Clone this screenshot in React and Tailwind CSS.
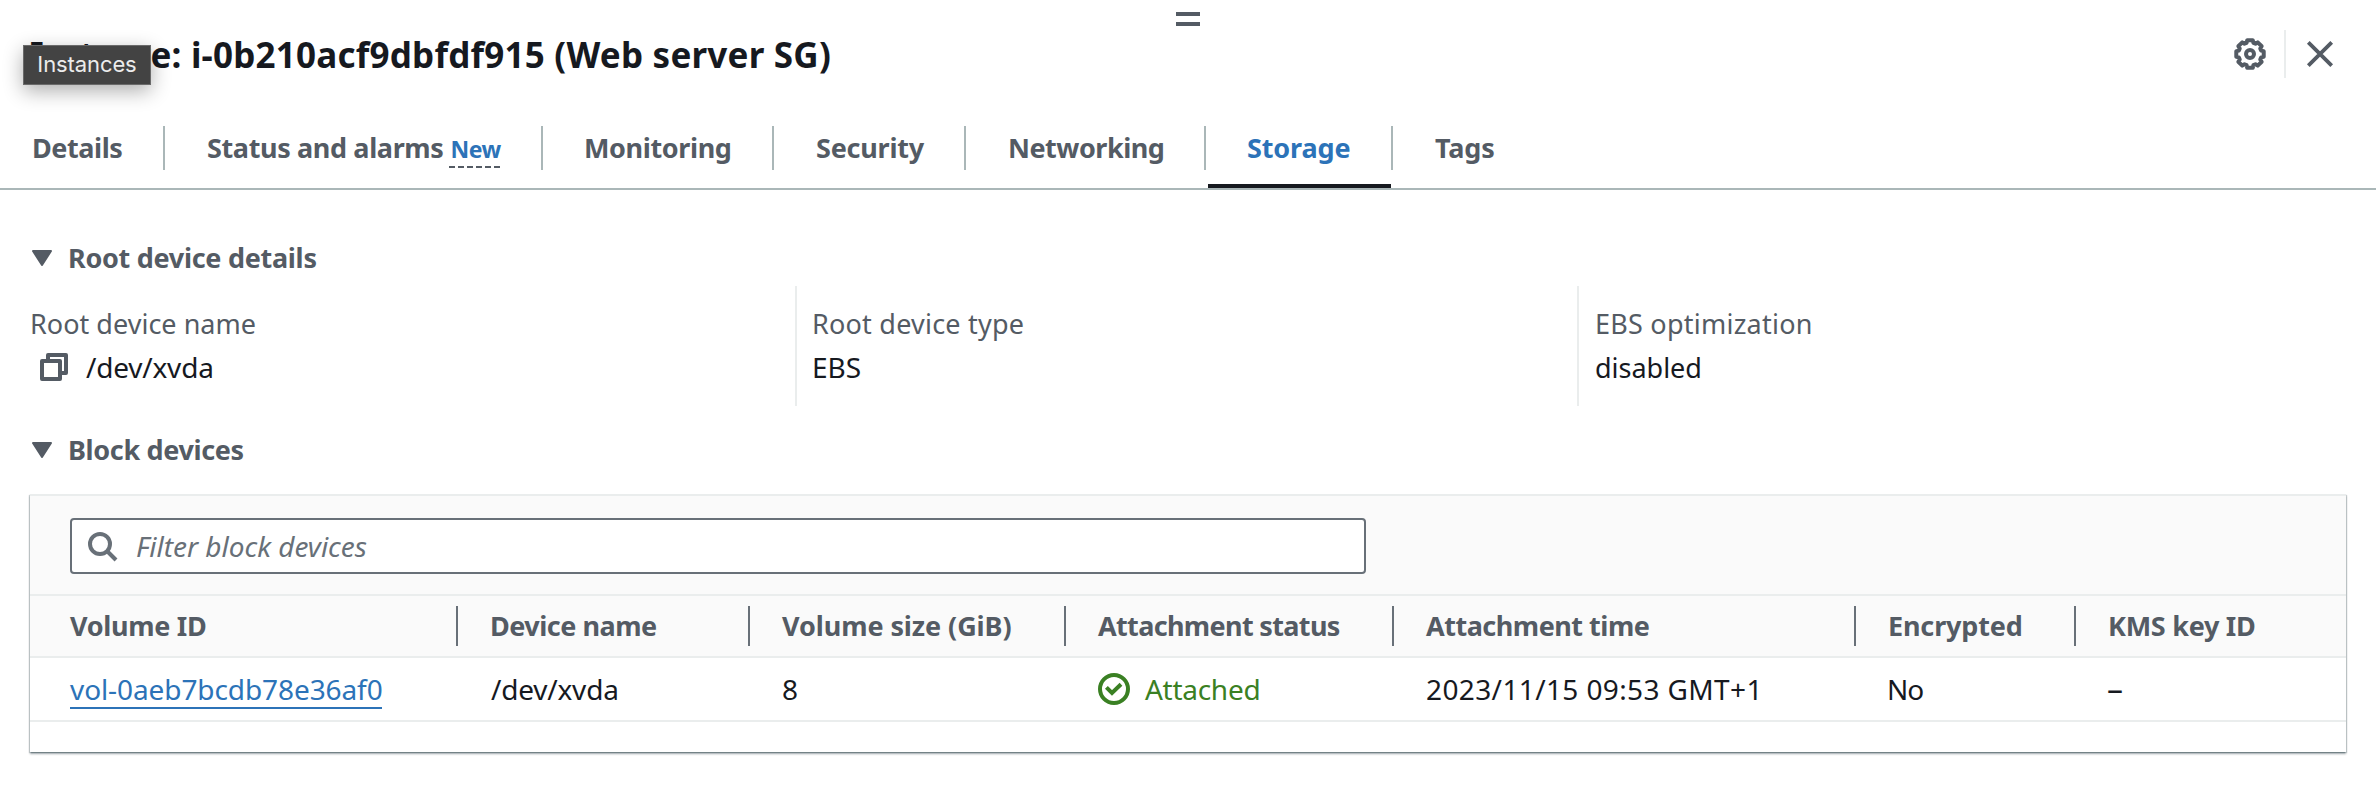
const gearPath =
  Array.from({ length: 8 }, (_, tooth) =>
    [
      [-17, 11.6],
      [-11.5, 14],
      [11.5, 14],
      [17, 11.6],
    ].map(([offset, radius]) => {
      const angle = ((tooth * 45 + offset) * Math.PI) / 180;
      return `${(16 + radius * Math.sin(angle)).toFixed(2)} ${(16 - radius * Math.cos(angle)).toFixed(2)}`;
    })
  )
    .flat()
    .map((point, i) => (i === 0 ? "M" : "L") + point)
    .join(" ") + " Z";

function GearIcon() {
  return (
    <svg className="h-8 w-8" viewBox="0 0 32 32" fill="none" stroke="currentColor" strokeWidth="4" strokeLinejoin="round">
      <path d={gearPath} />
      <circle cx="16" cy="16" r="4" />
    </svg>
  );
}

function CloseIcon() {
  return (
    <svg className="h-8 w-8" viewBox="0 0 32 32" fill="none" stroke="currentColor" strokeWidth="3.8">
      <path d="M4.3 4.3 L27.7 27.7 M27.7 4.3 L4.3 27.7" />
    </svg>
  );
}

function CopyIcon() {
  return (
    <svg className="h-8 w-8" viewBox="0 0 32 32" fill="none" stroke="currentColor" strokeWidth="4" strokeLinejoin="round">
      <path d="M4 10 H22 V28 H4 Z" />
      <path d="M10 10 V4 H28 V22 H22" />
    </svg>
  );
}

function SearchIcon() {
  return (
    <svg className="h-8 w-8" viewBox="0 0 32 32" fill="none" stroke="currentColor" strokeWidth="4">
      <circle cx="14" cy="14" r="10" />
      <path d="M21 21 L30 30" />
    </svg>
  );
}

function CheckCircleIcon() {
  return (
    <svg className="h-8 w-8" viewBox="0 0 32 32" fill="none" stroke="currentColor" strokeWidth="4">
      <circle cx="16" cy="16" r="14" />
      <path d="M8.4 14.4 L14 20 L23 11.3" />
    </svg>
  );
}

function SectionHeading({ children }) {
  return (
    <div className="flex h-10 items-center pl-8 font-bold text-[#545b64]">
      <svg className="mr-4 h-4 w-5" viewBox="0 0 20 16" fill="currentColor" stroke="currentColor" strokeWidth="2" strokeLinejoin="round">
        <path d="M1 1 H19 L10 15 Z" />
      </svg>
      {children}
    </div>
  );
}

const tabs = [
  { label: "Details", box: "w-[165px] pl-8", text: "tracking-[-0.43px]" },
  { label: "Status and alarms", badge: "New", box: "w-[378px] pl-[42px]", text: "tracking-[-0.37px]" },
  { label: "Monitoring", box: "w-[231px] pl-[41px]", text: "tracking-[-0.38px]" },
  { label: "Security", box: "w-[192px] pl-[42px]", text: "tracking-[-0.23px]" },
  { label: "Networking", box: "w-[240px] pl-[42px]", text: "tracking-[-0.49px]" },
  { label: "Storage", active: true, box: "w-[187px] pl-[41px]", text: "tracking-[-0.12px]" },
  { label: "Tags", last: true, box: "w-[120px] pl-[42px]", text: "tracking-[-0.12px]" },
];

function Tab({ label, badge, active, last, box, text }) {
  return (
    <div className={`relative flex shrink-0 items-center ${box}`}>
      <div className={`flex items-baseline whitespace-nowrap leading-10 ${text} ${active ? "text-[#2c73b8]" : ""}`}>
        {label}
        {badge && (
          <span className="ml-[6px] w-[51px] border-b-2 border-dashed border-[#545b64] pl-[1px] text-[23px] leading-[34px] tracking-[-0.5px] text-[#2c73b8]">
            {badge}
          </span>
        )}
      </div>
      {!last && <div className="ml-auto h-11 w-[2px] bg-[#aab7b8]" />}
      {active && <div className="absolute bottom-0 left-[2px] right-[2px] h-1 bg-[#16191f]" />}
    </div>
  );
}

const columns = [
  { label: "Volume ID", cls: "pl-10 tracking-[-0.31px]" },
  { label: "Device name", cls: "pl-8 tracking-[-0.5px]" },
  { label: "Volume size (GiB)", cls: "pl-8 tracking-[-0.08px]" },
  { label: "Attachment status", cls: "pl-8 tracking-[-0.65px]" },
  { label: "Attachment time", cls: "pl-8 tracking-[-0.49px]" },
  { label: "Encrypted", cls: "pl-8 tracking-[-0.15px]" },
  { label: "KMS key ID", cls: "pl-8 tracking-[-0.28px]" },
];

const gridCols = "grid grid-cols-[428px_292px_316px_328px_462px_220px_270px] items-center whitespace-nowrap";

export default function App() {
  return (
    <div className="relative flex h-[796px] w-[2376px] flex-col overflow-hidden bg-white font-['Noto_Sans',sans-serif] text-[27px] leading-[44px] text-[#16191f]">
      <div className="flex h-[30px] flex-col items-center gap-[6px] pt-3">
        <div className="h-1 w-6 bg-[#545b64]" />
        <div className="h-1 w-6 bg-[#545b64]" />
      </div>

      <header className="flex h-[78px] items-start justify-between">
        <h1 className="whitespace-nowrap pl-[30px] text-[35px] font-bold leading-[49px]">
          <span className="tracking-[-1.5px]">Instanc</span>
          <span className="tracking-[0.22px]">e: i-0b210acf9dbfdf915 (Web server SG)</span>
        </h1>
        <div className="flex h-12 items-center pr-10 text-[#545b64]">
          <GearIcon />
          <div className="ml-[18px] h-12 w-[2px] bg-[#eaeded]" />
          <div className="ml-[18px]">
            <CloseIcon />
          </div>
        </div>
      </header>

      <nav className="flex h-[82px] border-b-2 border-[#aab7b8] font-bold text-[#545b64]">
        {tabs.map((tab) => (
          <Tab key={tab.label} {...tab} />
        ))}
      </nav>

      <section className="pt-12">
        <SectionHeading>
          <span className="tracking-[-0.29px]">Root device details</span>
        </SectionHeading>
        <div className="mt-2 flex h-[120px]">
          <div className="w-[795px] pl-[30px] pt-4">
            <div className="tracking-[0.02px] text-[#545b64]">Root device name</div>
            <div className="flex items-center pl-2">
              <span className="text-[#545b64]">
                <CopyIcon />
              </span>
              <span className="ml-4 text-[28px] leading-[42px] tracking-[-0.2px]">/dev/xvda</span>
            </div>
          </div>
          <div className="w-[782px] border-l-2 border-[#eaeded] pl-[15px] pt-4">
            <div className="tracking-[0.22px] text-[#545b64]">Root device type</div>
            <div className="text-[28px] leading-[42px]">EBS</div>
          </div>
          <div className="flex-1 border-l-2 border-[#eaeded] pl-4 pt-4">
            <div className="tracking-[0.24px] text-[#545b64]">EBS optimization</div>
            <div className="tracking-[-0.02px]">disabled</div>
          </div>
        </div>
      </section>

      <section className="pt-6">
        <SectionHeading>
          <span className="tracking-[-0.35px]">Block devices</span>
        </SectionHeading>
        <div className="mx-[30px] mt-6 h-[258px] border-t-2 border-[#eaeded] bg-white shadow-[0_2px_2px_0_rgba(0,28,36,0.35),1px_1px_1px_0_rgba(0,28,36,0.18),-1px_1px_1px_0_rgba(0,28,36,0.18)]">
          <div className="h-[100px] border-b-2 border-[#eaeded] bg-[#fafafa] pl-10 pt-[22px]">
            <div className="flex h-14 w-[1296px] items-center rounded-[4px] border-2 border-[#687078] bg-white pl-[14px] text-[#687078]">
              <SearchIcon />
              <span className="ml-[18px] text-[28px] italic tracking-[-0.02px]">Filter block devices</span>
            </div>
          </div>
          <div className={`h-[62px] border-b-2 border-[#eaeded] bg-[#fafafa] font-bold text-[#545b64] ${gridCols}`}>
            {columns.map((column, i) => (
              <div key={column.label} className={`flex h-10 items-center ${column.cls}`}>
                {column.label}
                {i < columns.length - 1 && <div className="ml-auto h-10 w-[2px] bg-[#687078]" />}
              </div>
            ))}
          </div>
          <div className={`h-16 border-b-2 border-[#eaeded] text-[28px] ${gridCols}`}>
            <div className="flex pl-10 pt-[3px]">
              <a className="w-[312px] border-b-2 border-[#2c73b8] leading-[35px] tracking-[-0.09px] text-[#2c73b8]">vol-0aeb7bcdb78e36af0</a>
            </div>
            <div className="pl-[33px] tracking-[-0.2px]">/dev/xvda</div>
            <div className="pl-8">8</div>
            <div className="flex items-center pl-8 text-[#3a8023]">
              <CheckCircleIcon />
              <span className="ml-[15px] tracking-[-0.28px]">Attached</span>
            </div>
            <div className="pl-8 tracking-[0.38px]">2023/11/15 09:53 GMT+1</div>
            <div className="pl-[31px] tracking-[-1px]">No</div>
            <div className="pl-[31px] text-[32px]">–</div>
          </div>
        </div>
      </section>

      <div className="absolute left-[23px] top-[45px] flex h-10 w-[128px] items-center justify-center border border-[#6a6a6a] bg-[#434343] pb-[2px] font-['Inter',sans-serif] text-[22px] leading-7 tracking-[-0.1px] text-[#ececec] shadow-[0_6px_20px_rgba(0,0,0,0.32)]">
        Instances
      </div>
    </div>
  );
}
